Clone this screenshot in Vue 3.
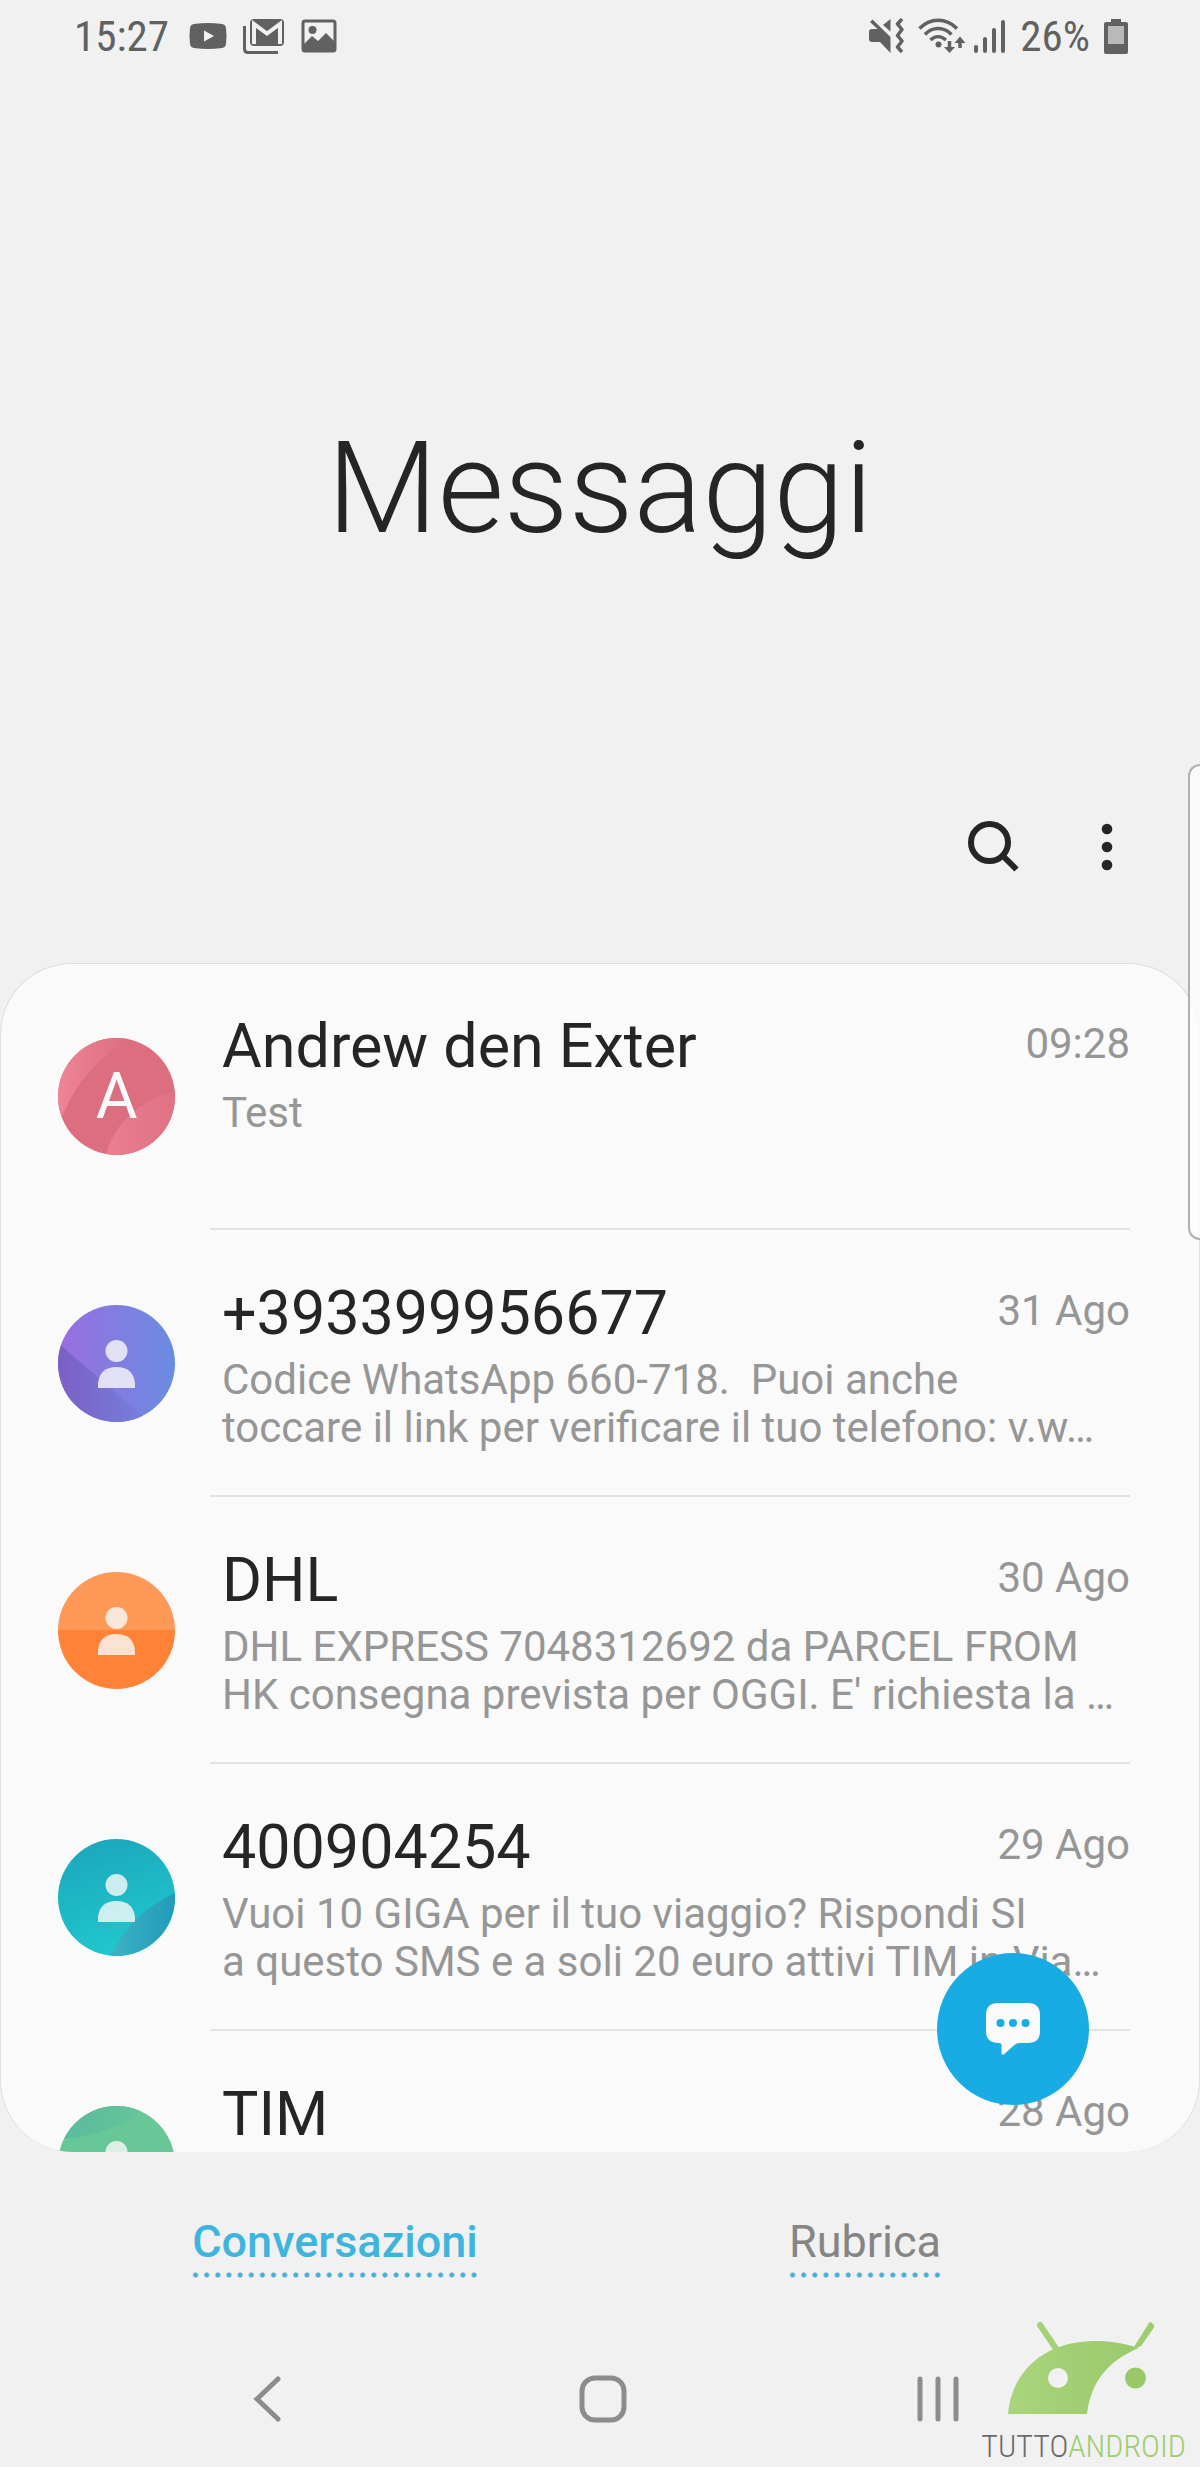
<script setup>
import { ref } from 'vue'

const conversazioni = ref([
  { id: 1, nome: 'Andrew den Exter', data: '09:28', testo: 'Test', tono: 'rosa', iniziale: 'A' },
  { id: 2, nome: '+393399956677', data: '31 Ago', testo: 'Codice WhatsApp 660-718.  Puoi anche\ntoccare il link per verificare il tuo telefono: v.w…', tono: 'viola' },
  { id: 3, nome: 'DHL', data: '30 Ago', testo: "DHL EXPRESS 7048312692 da PARCEL FROM\nHK consegna prevista per OGGI. E' richiesta la …", tono: 'arancio' },
  { id: 4, nome: '400904254', data: '29 Ago', testo: 'Vuoi 10 GIGA per il tuo viaggio? Rispondi SI\na questo SMS e a soli 20 euro attivi TIM in Via…', tono: 'azzurro' },
  { id: 5, nome: 'TIM', data: '28 Ago', testo: '', tono: 'verde' }
])

const schede = ['Conversazioni', 'Rubrica']
const attiva = ref('Conversazioni')
</script>

<template>
  <div class="schermo">
    <div class="stato">
      <span class="ora">15:27</span>
      <svg class="youtube" width="38" height="28" viewBox="0 0 38 28">
        <path d="M5 2Q19 0 33 2Q36.500 2.500 37 6Q38 14 37 22Q36.500 25.500 33 26Q19 28 5 26Q1.500 25.500 1 22Q0 14 1 6Q1.500 2.500 5 2Z" fill="#616161" />
        <path d="M15 8.500V19.500L25 14Z" fill="#f1f1f1" />
      </svg>
      <svg class="gmail" width="42" height="36" viewBox="0 0 42 36">
        <path d="M1.500 8V31Q1.500 34.500 5 34.500H35" fill="none" stroke="#616161" stroke-width="3" />
        <rect x="7" y="1" width="34" height="27" rx="4" fill="#616161" />
        <path d="M11 26V6L24 15.500L37 6V26" fill="none" stroke="#f1f1f1" stroke-width="4" />
      </svg>
      <svg class="foto" width="36" height="34" viewBox="0 0 36 34">
        <rect x="2" y="2" width="32" height="30" rx="2" fill="none" stroke="#616161" stroke-width="3" />
        <circle cx="11.500" cy="11" r="4" fill="#616161" />
        <path d="M2 26L11 17L17 22L25 14L34 23V32H2Z" fill="#616161" />
      </svg>
      <div class="destra">
        <svg width="36" height="36" viewBox="0 0 36 36">
          <path d="M1 14Q1 11 4 11H9.500L2 4L4.500 1.500L22.500 19V35L12 24H4Q1 24 1 21Z" fill="#616161" />
          <path d="M15 7L22.500 1V13.500Z" fill="#616161" />
          <path d="M34 1L29.500 6L34 11.500L29.500 17.500L34 23L29.500 29L34 34" fill="none" stroke="#616161" stroke-width="3.500" stroke-linejoin="round" />
        </svg>
        <svg width="48" height="36" viewBox="0 0 48 36">
          <g fill="none" stroke="#616161" stroke-width="3.500">
            <path d="M1.500 10.500C12 -0.500 28 -0.500 39 10.500" />
            <path d="M7 16.500C14 8.500 26 8.500 33.500 16.500" />
            <path d="M12.500 22C17 17.500 23 17.500 28 22" />
            <path d="M31.500 23V31M42 30V23" />
          </g>
          <circle cx="20.500" cy="26.500" r="3" fill="#616161" />
          <path d="M26 29H37L31.500 35ZM36.500 25L42 18.500L47.500 25Z" fill="#616161" />
        </svg>
        <svg width="34" height="36" viewBox="0 0 34 36">
          <path d="M4 29V33M13 21V33M22 12V33M31 4V33" stroke="#616161" stroke-width="4" stroke-linecap="round" />
        </svg>
        <span class="ora">26%</span>
        <svg class="batteria" width="24" height="36" viewBox="0 0 24 36">
          <path d="M7 1H17V4H22Q24 4 24 6V34Q24 36 22 36H2Q0 36 0 34V6Q0 4 2 4H7Z" fill="#616161" />
          <rect x="4" y="8" width="16" height="18" fill="#b9b9b9" />
        </svg>
      </div>
    </div>

    <header class="testata">
      <h1>Messaggi</h1>
      <div class="azioni">
        <button type="button" aria-label="Cerca">
          <svg width="54" height="54" viewBox="0 0 54 54" fill="none" stroke="#252525">
            <circle cx="22.500" cy="22.500" r="18.500" stroke-width="6" />
            <path d="M36 36L49.500 49.500" stroke-width="6" />
          </svg>
        </button>
        <button type="button" aria-label="Altre opzioni">
          <svg width="12" height="54" viewBox="0 0 12 54" fill="#252525">
            <circle cx="6" cy="9" r="5.300" />
            <circle cx="6" cy="27" r="5.300" />
            <circle cx="6" cy="45" r="5.300" />
          </svg>
        </button>
      </div>
    </header>

    <main class="scheda">
      <ul class="elenco">
        <li v-for="c in conversazioni" :key="c.id">
          <a class="riga" href="#">
            <span class="avatar">
              <svg viewBox="0 0 117 117">
                <g v-if="c.tono === 'rosa'">
                  <defs>
                    <linearGradient id="rosa1"><stop offset="0" stop-color="#ee8497" /><stop offset="1" stop-color="#dc6e7f" /></linearGradient>
                    <linearGradient id="rosa2"><stop offset="0" stop-color="#ea7f93" /><stop offset="1" stop-color="#df7182" /></linearGradient>
                  </defs>
                  <rect width="117" height="117" fill="#dc6e7f" />
                  <path d="M0 0H72Q26 28 6 74L0 90Z" fill="url(#rosa1)" />
                  <path d="M48 117Q60 70 117 52V117Z" fill="url(#rosa2)" />
                </g>
                <g v-else-if="c.tono === 'viola'">
                  <defs>
                    <linearGradient id="viola1"><stop offset="0" stop-color="#9b6ee0" /><stop offset="1" stop-color="#698ce1" /></linearGradient>
                    <linearGradient id="viola2"><stop offset="0" stop-color="#7c5fc4" /><stop offset="1" stop-color="#7482dd" /></linearGradient>
                  </defs>
                  <rect width="117" height="117" fill="url(#viola1)" />
                  <path d="M0 38L92 117H0Z" fill="url(#viola2)" />
                </g>
                <g v-else-if="c.tono === 'arancio'">
                  <rect width="117" height="58" fill="#ff9958" />
                  <rect y="58" width="117" height="59" fill="#ff8237" />
                </g>
                <g v-else-if="c.tono === 'azzurro'">
                  <defs>
                    <linearGradient id="azzurro1" x2="0.3" y2="1"><stop offset="0" stop-color="#1ba5bb" /><stop offset="1" stop-color="#20c6cc" /></linearGradient>
                    <linearGradient id="azzurro2"><stop offset="0" stop-color="#3eb2c4" /><stop offset="1" stop-color="#219bb9" /></linearGradient>
                  </defs>
                  <rect width="117" height="117" fill="url(#azzurro1)" />
                  <path d="M53 117Q72 74 117 54V117Z" fill="url(#azzurro2)" />
                </g>
                <g v-else>
                  <defs>
                    <linearGradient id="verde1"><stop offset="0" stop-color="#59b99d" /><stop offset="1" stop-color="#67c69a" /></linearGradient>
                  </defs>
                  <rect width="117" height="117" fill="#68c797" />
                  <path d="M0 0H92Q56 30 0 33Z" fill="url(#verde1)" />
                </g>
                <g v-if="!c.iniziale" fill="#fafafa" fill-opacity="0.8">
                  <circle cx="58.500" cy="46" r="11" />
                  <path d="M40 83V78Q42 62 58.500 62Q75 62 77 78V83Z" />
                </g>
              </svg>
              <span v-if="c.iniziale" class="iniziale">{{ c.iniziale }}</span>
            </span>
            <span class="corpo">
              <span class="cima">
                <span class="nome">{{ c.nome }}</span>
                <span class="data">{{ c.data }}</span>
              </span>
              <span class="testo">{{ c.testo }}</span>
            </span>
          </a>
        </li>
      </ul>
      <button class="nuovo" type="button" aria-label="Nuovo messaggio">
        <svg width="54" height="54" viewBox="0 0 54 54">
          <path d="M12 1H42Q54 1 54 13V29Q54 41 42 41H34Q31 41 29 42.500L18 52.200Q15.500 53.500 15.500 51V43Q15.500 41 13 41Q0 41 0 29V13Q0 1 12 1Z" fill="#fafafa" />
          <circle cx="14.500" cy="21" r="4" fill="#19abe4" />
          <circle cx="27" cy="21" r="4" fill="#19abe4" />
          <circle cx="39.500" cy="21" r="4" fill="#19abe4" />
        </svg>
      </button>
    </main>

    <div class="schede">
      <div v-for="s in schede" :key="s" class="voce">
        <button type="button" :class="{ attiva: s === attiva }" @click="attiva = s">{{ s }}</button>
      </div>
    </div>

    <nav class="navigazione">
      <button type="button" aria-label="Indietro">
        <svg width="48" height="48" viewBox="0 0 48 48"><path d="M34 4L13 24L34 44" /></svg>
      </button>
      <button type="button" aria-label="Home">
        <svg width="48" height="48" viewBox="0 0 48 48"><rect x="3" y="3" width="42" height="42" rx="13" /></svg>
      </button>
      <button type="button" aria-label="Recenti">
        <svg width="48" height="48" viewBox="0 0 48 48"><path d="M6 4V44M24 4V44M42 4V44" /></svg>
      </button>
    </nav>

    <div class="bordo"></div>

    <div class="marchio">
      <svg width="148" height="98" viewBox="0 0 148 98">
        <defs>
          <linearGradient id="robot"><stop offset="0" stop-color="#a9d57c" /><stop offset="1" stop-color="#9bc96a" /></linearGradient>
        </defs>
        <path d="M3 95C8 42 52 20 95 22Q116 23 134 29C104 41 86 62 82 95Z" fill="url(#robot)" />
        <path d="M35 6L54 34" stroke="#a5d177" stroke-width="6" stroke-linecap="round" />
        <path d="M146.500 3.500Q151 7 148 10L136 27Q130 29 127 31L144 4Q145 2.500 146.500 3.500Z" fill="#9fcc6f" />
        <circle cx="53" cy="59" r="10" fill="#f1f1f1" />
        <circle cx="130.500" cy="59" r="10.500" fill="#9bc96a" />
      </svg>
      <span class="scritta"><span>TUTTO</span><b>ANDROID</b></span>
    </div>
  </div>
</template>

<style>
body {
  background: #f1f1f1;
}
</style>

<style scoped>
.schermo {
  position: relative;
  display: flex;
  flex-direction: column;
  height: 100vh;
  overflow: hidden;
  background: #f1f1f1;
  color: #252525;
  font-family: Roboto, "Liberation Sans", sans-serif;
}

button {
  display: flex;
  padding: 0;
  border: 0;
  background: none;
  font-family: inherit;
  cursor: pointer;
}

svg {
  display: block;
}

.stato {
  display: flex;
  align-items: center;
  height: 72px;
  padding: 0 72px 0 74px;
  color: #616161;
}

.ora {
  font-family: "Roboto Condensed", Roboto, sans-serif;
  font-size: 43px;
  line-height: 52px;
}

.youtube {
  margin-left: 20px;
}

.gmail {
  margin-left: 16px;
}

.foto {
  margin-left: 16px;
}

.destra {
  display: flex;
  align-items: center;
  gap: 14px;
  margin-left: auto;
}

.destra svg:nth-child(3) {
  margin-left: -8px;
}

.testata {
  display: flex;
  flex-direction: column;
  justify-content: space-between;
  height: 891px;
}

h1 {
  margin: 341px 0 0;
  font-size: 128px;
  font-weight: 300;
  line-height: 150px;
  text-align: center;
}

.azioni {
  display: flex;
  justify-content: flex-end;
  gap: 80px;
  padding: 0 87px 89px 0;
}

.scheda {
  position: relative;
  flex: 1;
  min-height: 0;
  overflow: hidden;
  border-radius: 72px;
  background: #fafafa;
  box-shadow: inset 0 1px #dedede, inset 1px 0 #dedede, inset -1px 0 #dedede;
}

.elenco {
  margin: 0;
  padding: 0;
  list-style: none;
}

.riga {
  display: flex;
  height: 267px;
  padding: 0 70px 0 58px;
  color: inherit;
  text-decoration: none;
}

.avatar {
  position: relative;
  flex: none;
  width: 117px;
  height: 117px;
  margin-top: 75px;
  overflow: hidden;
  border-radius: 50%;
}

.iniziale {
  position: absolute;
  inset: 0;
  color: #fafafa;
  font-size: 64px;
  line-height: 117px;
  text-align: center;
}

.corpo {
  flex: 1;
  min-width: 0;
  margin-left: 35px;
  padding: 47px 0 0 12px;
  border-bottom: 2px solid #e3e3e3;
}

.cima {
  display: flex;
  justify-content: space-between;
}

.nome {
  font-size: 61px;
  line-height: 72px;
}

.data {
  margin-top: 10px;
  color: #969696;
  font-size: 42px;
  line-height: 48px;
}

.testo {
  display: block;
  margin-top: 7px;
  color: #969696;
  font-size: 42px;
  line-height: 48px;
  white-space: pre;
}

.nuovo {
  position: absolute;
  right: 111px;
  bottom: 47px;
  align-items: center;
  justify-content: center;
  width: 152px;
  height: 152px;
  border-radius: 50%;
  background: #19abe4;
}

.schede {
  display: flex;
  padding: 64px 70px 0;
}

.voce {
  display: flex;
  flex: 1;
  justify-content: center;
}

.voce button {
  padding: 0 2px 10px;
  background: radial-gradient(circle, #4bafd5 2px, transparent 3px) left bottom / 11px 6px;
  background-repeat: round no-repeat;
  color: #858585;
  font-size: 45px;
  line-height: 52px;
}

.voce .attiva {
  color: #3fb5de;
  font-weight: 500;
}

.navigazione {
  display: flex;
  padding: 97px 95px 44px 100px;
}

.navigazione button {
  flex: 1;
  justify-content: center;
}

.navigazione svg {
  fill: none;
  stroke: #8c8c8c;
  stroke-width: 5px;
  stroke-linecap: round;
}

.bordo {
  position: absolute;
  top: 764px;
  right: 0;
  width: 10px;
  height: 472px;
  border: 2px solid #b0b0b0;
  border-right: 0;
  border-radius: 12px 0 0 12px;
  background: rgba(252, 252, 252, 0.8);
}

.marchio {
  position: absolute;
  right: 14px;
  bottom: 4px;
  display: flex;
  flex-direction: column;
  align-items: center;
}

.marchio svg {
  margin-right: 10px;
  overflow: visible;
}

.scritta {
  margin-top: 12px;
  color: #6b6b6b;
  font-family: "Roboto Condensed", Roboto, sans-serif;
  font-size: 32px;
  font-weight: 300;
  line-height: 34px;
}

.scritta b {
  color: #a0cd70;
  font-weight: 300;
}
</style>
